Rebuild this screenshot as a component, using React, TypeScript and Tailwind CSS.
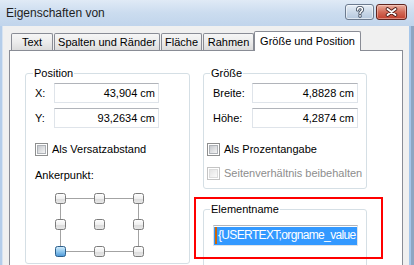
import React from "react";

function Checkbox({ disabled = false }: { disabled?: boolean }) {
  return disabled ? (
    <span className="w-[13px] h-[13px] shrink-0 border border-[#c4c4c4] bg-white p-[1px] flex">
      <span className="flex-1 border border-[#dcdcdc] bg-gradient-to-br from-[#e4e4e4] to-[#fafafa]" />
    </span>
  ) : (
    <span className="w-[13px] h-[13px] shrink-0 border border-[#8e8f8f] bg-white p-[1px] flex">
      <span className="flex-1 border border-[#aeb2b7] bg-gradient-to-br from-[#c6c9ce] to-[#f4f4f4]" />
    </span>
  );
}

function Field({ value, width }: { value: string; width: string }) {
  return (
    <div
      className={`${width} h-[20px] border border-[#dfe4ea] border-t-[#b1b4ba] bg-white flex items-center justify-end pr-[3px]`}
    >
      {value}
    </div>
  );
}

function AnchorGrid() {
  const cols = [0, 39, 78];
  const rows = [0, 26, 53];
  return (
    <svg width="89" height="64" viewBox="0 0 89 64" className="block">
      <defs>
        <linearGradient id="ng" x1="0" y1="0" x2="0" y2="1">
          <stop offset="0" stopColor="#ffffff" />
          <stop offset="0.5" stopColor="#f0f0f0" />
          <stop offset="0.55" stopColor="#dcdcdc" />
          <stop offset="1" stopColor="#e8e8e8" />
        </linearGradient>
        <linearGradient id="sg" x1="0" y1="0" x2="0" y2="1">
          <stop offset="0" stopColor="#d6eefc" />
          <stop offset="0.5" stopColor="#8fc7ee" />
          <stop offset="1" stopColor="#4a95d6" />
        </linearGradient>
      </defs>
      <rect x="5.5" y="5.5" width="78" height="53" fill="none" stroke="#a3a3a3" strokeWidth="1" />
      {rows.map((r, ri) =>
        cols.map((c, ci) => {
          const sel = ri === 2 && ci === 0;
          return (
            <rect
              key={`${ri}-${ci}`}
              x={c + 0.5}
              y={r + 0.5}
              width="10"
              height="10"
              rx="2"
              fill={sel ? "url(#sg)" : "url(#ng)"}
              stroke={sel ? "#2c5f8c" : "#7c7c7c"}
              strokeWidth="1"
            />
          );
        })
      )}
    </svg>
  );
}

export default function App() {
  return (
    <div className="w-[414px] h-[265px] overflow-hidden flex flex-col bg-[#c3d7ed] font-['Liberation_Sans',Arial,sans-serif] text-[11px] leading-[13px] text-black">
      {/* Title bar */}
      <div className="h-[26px] shrink-0 flex items-start bg-gradient-to-b from-[#e0eaf6] via-[#cbdcef] to-[#c1d5ec]">
        <div className="pl-[6px] pt-[6px] text-[12px] leading-[14px] text-[#1e1e1e]">Eigenschaften von</div>
        <div className="ml-auto mt-[4px] mr-[7px] flex gap-[2px]">
          <div className="w-[29px] h-[16px] rounded-[3px] border border-[#6c7b8f] bg-gradient-to-b from-[#e7eef6] via-[#cbd9e8] to-[#b5c8de] flex items-center justify-center shadow-[inset_0_0_0_1px_rgba(255,255,255,0.55)]">
            <svg width="10" height="12" viewBox="0 0 10 12">
              <path d="M2.6 3.9C2.6 2.5 3.7 1.6 5 1.6C6.4 1.6 7.4 2.5 7.4 3.7C7.4 4.9 6.4 5.3 5.7 5.8C5.1 6.2 5 6.6 5 7.4" fill="none" stroke="#3d4a5c" strokeWidth="3.2" strokeLinecap="round" />
              <path d="M5 9.6V10.2" stroke="#3d4a5c" strokeWidth="3.2" strokeLinecap="round" />
              <path d="M2.6 3.9C2.6 2.5 3.7 1.6 5 1.6C6.4 1.6 7.4 2.5 7.4 3.7C7.4 4.9 6.4 5.3 5.7 5.8C5.1 6.2 5 6.6 5 7.4" fill="none" stroke="#ffffff" strokeWidth="1.5" strokeLinecap="round" />
              <path d="M5 9.6V10.2" stroke="#ffffff" strokeWidth="1.5" strokeLinecap="round" />
            </svg>
          </div>
          <div className="w-[31px] h-[16px] rounded-[3px] border border-[#5f2520] bg-gradient-to-b from-[#eab0a2] via-[#d26a57] to-[#c23f2d] flex items-center justify-center shadow-[inset_0_0_0_1px_rgba(255,220,210,0.45)]">
            <svg width="13" height="10" viewBox="0 0 13 10">
              <path d="M2.5 2L10.5 8M10.5 2L2.5 8" stroke="#4a1a16" strokeWidth="3.6" strokeLinecap="round" />
              <path d="M2.5 2L10.5 8M10.5 2L2.5 8" stroke="#ffffff" strokeWidth="2" strokeLinecap="round" />
            </svg>
          </div>
        </div>
      </div>

      {/* Body */}
      <div className="flex-1 flex min-h-0">
        <div className="w-[3px] shrink-0 flex">
          <div className="w-[2px] bg-[#b4cdea]" />
          <div className="w-[1px] bg-[#d7e3f1]" />
        </div>
        <div className="flex-1 min-w-0 bg-[#f0f0f0] flex flex-col pt-[5px] pl-[6px] pr-[6px]">
          {/* Tab strip */}
          <div className="h-[19px] flex items-end pl-[2px]">
            <div className="w-[42px] h-[17px] border border-b-0 border-[#898c95] rounded-t-[2px] bg-gradient-to-b from-[#f6f6f6] via-[#ececec] to-[#dcdcdc] flex items-center justify-center pt-[1px]">Text</div>
            <div className="ml-[1px] w-[106px] h-[17px] border border-b-0 border-[#898c95] rounded-t-[2px] bg-gradient-to-b from-[#f6f6f6] via-[#ececec] to-[#dcdcdc] flex items-center justify-center pt-[1px]">Spalten und Ränder</div>
            <div className="ml-[1px] w-[41px] h-[17px] border border-b-0 border-[#898c95] rounded-t-[2px] bg-gradient-to-b from-[#f6f6f6] via-[#ececec] to-[#dcdcdc] flex items-center justify-center pt-[1px]">Fläche</div>
            <div className="ml-[1px] w-[51px] h-[17px] border border-b-0 border-[#898c95] rounded-t-[2px] bg-gradient-to-b from-[#f6f6f6] via-[#ececec] to-[#dcdcdc] flex items-center justify-center pt-[1px]">Rahmen</div>
            <div className="relative z-10 -mb-[1px] w-[107px] h-[20px] border border-b-0 border-[#898c95] rounded-t-[2px] bg-white flex items-start justify-center pt-[3px]">Größe und Position</div>
          </div>

          {/* Panel */}
          <div className="flex-1 border border-b-0 border-[#898c95] bg-white flex items-start pl-[15px] pt-[16px] gap-[13px]">
            {/* Position */}
            <fieldset className="w-[165px] border border-[#d5dfe5] rounded-[3px] pb-[6px] flex flex-col">
              <legend className="ml-[7px] px-[1px] leading-[13px]">Position</legend>
              <div className="mt-[3px] ml-[9px] flex items-center h-[20px]">
                <span className="w-[19px]">X:</span>
                <Field value="43,904 cm" width="w-[105px]" />
              </div>
              <div className="mt-[5px] ml-[9px] flex items-center h-[20px]">
                <span className="w-[19px]">Y:</span>
                <Field value="93,2634 cm" width="w-[105px]" />
              </div>
              <div className="mt-[15px] ml-[9px] flex items-center gap-[4px] h-[13px]">
                <Checkbox />
                <span>Als Versatzabstand</span>
              </div>
              <div className="mt-[13px] ml-[9px]">Ankerpunkt:</div>
              <div className="mt-[11px] ml-[29px]">
                <AnchorGrid />
              </div>
            </fieldset>

            {/* Right column */}
            <div className="w-[164px] flex flex-col">
              <fieldset className="border border-[#d5dfe5] rounded-[3px] pb-[8px] flex flex-col">
                <legend className="ml-[6px] px-[1px] leading-[13px]">Größe</legend>
                <div className="mt-[3px] ml-[9px] flex items-center h-[20px]">
                  <span className="w-[39px]">Breite:</span>
                  <Field value="4,8828 cm" width="w-[106px]" />
                </div>
                <div className="mt-[5px] ml-[9px] flex items-center h-[20px]">
                  <span className="w-[39px]">Höhe:</span>
                  <Field value="4,2874 cm" width="w-[106px]" />
                </div>
                <div className="mt-[15px] ml-[3px] flex items-center gap-[4px] h-[13px]">
                  <Checkbox />
                  <span>Als Prozentangabe</span>
                </div>
                <div className="mt-[11px] ml-[3px] flex items-center gap-[4px] h-[13px]">
                  <Checkbox disabled />
                  <span className="text-[#8d8d8d]">Seitenverhältnis beibehalten</span>
                </div>
              </fieldset>

              <div className="relative mt-[14px]">
                <fieldset className="border border-[#d5dfe5] rounded-[3px] pb-[30px] flex flex-col">
                  <legend className="ml-[6px] px-[1px] leading-[13px]">Elementname</legend>
                  <div className="mt-[9px] ml-[9px] w-[145px] h-[21px] border border-[#dfe4ea] border-t-[#b1b4ba] bg-white flex items-center pl-[0px] overflow-hidden">
                    <span className="h-[18px] bg-[#3399ff] text-white flex items-center pl-[1px] pr-[1px] text-[12px] tracking-[-0.65px] whitespace-nowrap">
                      <span className="w-[2px] h-[17px] bg-[#c8680c] mr-[1px]" />
                      {"{USERTEXT;orgname_value"}
                    </span>
                  </div>
                </fieldset>
                <div className="absolute left-[-9px] top-[-6px] w-[189px] h-[62px] border-2 border-[#ff0000] pointer-events-none" />
              </div>
            </div>
          </div>
        </div>
        <div className="w-[5px] shrink-0 flex">
          <div className="w-[2px] bg-[#a5c6ea]" />
          <div className="w-[3px] bg-[#8ea6c2]" />
        </div>
      </div>
    </div>
  );
}
